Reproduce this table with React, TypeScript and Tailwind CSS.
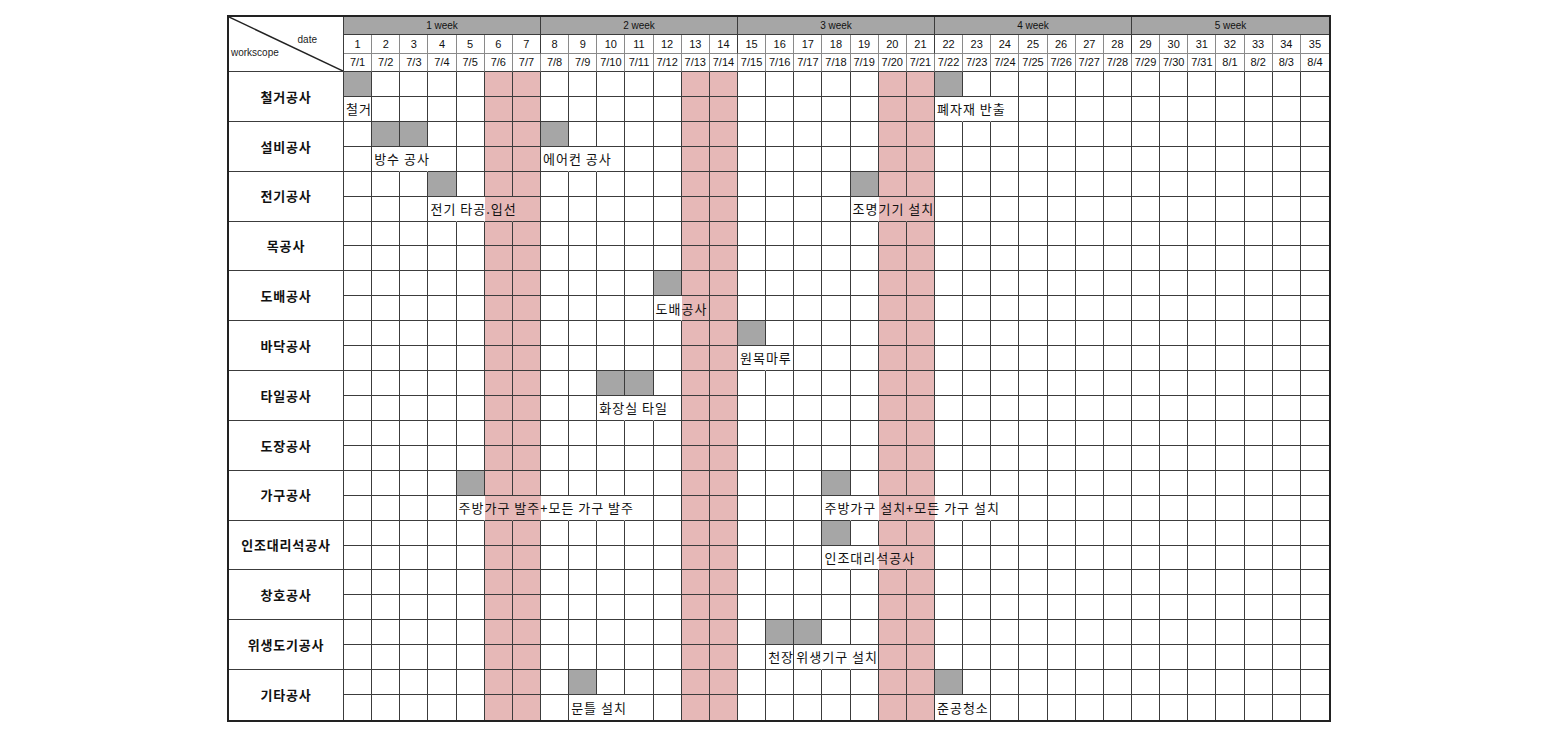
const WEEKS = ["1 week", "2 week", "3 week", "4 week", "5 week"];
const DAYS = Array.from({ length: 35 }, (_, i) => i + 1);
const PINK = [6, 7, 13, 14, 20, 21];

const dateOf = (d: number) => (d <= 31 ? `7/${d}` : `8/${d - 31}`);

type Label = { col: number; span: number; text: string; clip?: boolean };
type Task = { name: string; fills: number[]; labels: Label[] };

const TASKS: Task[] = [
  {
    name: "철거공사",
    fills: [1, 22],
    labels: [
      { col: 1, span: 1, text: "철거" },
      { col: 22, span: 3, text: "폐자재 반출" },
    ],
  },
  {
    name: "설비공사",
    fills: [2, 3, 8],
    labels: [
      { col: 2, span: 3, text: "방수 공사" },
      { col: 8, span: 3, text: "에어컨 공사" },
    ],
  },
  {
    name: "전기공사",
    fills: [4, 19],
    labels: [
      { col: 4, span: 4, text: "전기 타공.입선" },
      { col: 19, span: 3, text: "조명기기 설치" },
    ],
  },
  { name: "목공사", fills: [], labels: [] },
  { name: "도배공사", fills: [12], labels: [{ col: 12, span: 2, text: "도배공사" }] },
  { name: "바닥공사", fills: [15], labels: [{ col: 15, span: 2, text: "원목마루" }] },
  { name: "타일공사", fills: [10, 11], labels: [{ col: 10, span: 3, text: "화장실 타일" }] },
  { name: "도장공사", fills: [], labels: [] },
  {
    name: "가구공사",
    fills: [5, 18],
    labels: [
      { col: 5, span: 7, text: "주방가구 발주+모든 가구 발주" },
      { col: 18, span: 7, text: "주방가구 설치+모든 가구 설치" },
    ],
  },
  { name: "인조대리석공사", fills: [18], labels: [{ col: 18, span: 4, text: "인조대리석공사" }] },
  { name: "창호공사", fills: [], labels: [] },
  {
    name: "위생도기공사",
    fills: [16, 17],
    labels: [
      { col: 16, span: 1, text: "천장", clip: true },
      { col: 17, span: 3, text: "위생기구 설치" },
    ],
  },
  {
    name: "기타공사",
    fills: [9, 22],
    labels: [
      { col: 9, span: 3, text: "문틀 설치" },
      { col: 22, span: 2, text: "준공청소" },
    ],
  },
];

const KR = { fontFamily: '"Noto Sans CJK KR", "Noto Sans", sans-serif' };
const EN = { fontFamily: '"Liberation Sans", Arial, sans-serif' };

const TaskRows = ({ task, last }: { task: Task; last: boolean }) => {
  const bottom = (isLast: boolean) => (isLast ? "border-b-0" : "border-b");

  const labelAt = (c: number) => task.labels.find((l) => l.col === c);
  const covered = (c: number) =>
    task.labels.some((l) => c >= l.col && c < l.col + l.span - 1);

  return (
    <>
      <div
        className={`row-span-2 flex items-center justify-center border-r border-[#3c3c3c] ${bottom(last)} text-[13px] font-bold tracking-[0.8px] text-[#111]`}
        style={KR}
      >
        {task.name}
      </div>

      {/* top row: progress fills */}
      {DAYS.map((d) => {
        const bg = task.fills.includes(d)
          ? "bg-[#a6a6a6]"
          : PINK.includes(d)
            ? "bg-[#e6b8b7]"
            : "bg-white";
        return (
          <div
            key={`t${d}`}
            className={`${bg} border-b border-[#3c3c3c] ${d === 35 ? "" : "border-r"}`}
          />
        );
      })}

      {/* bottom row: labels spilling over */}
      {DAYS.map((d) => {
        const bg = PINK.includes(d) ? "bg-[#e6b8b7]" : "bg-white";
        const label = labelAt(d);
        const hideRight = covered(d);
        return (
          <div
            key={`b${d}`}
            className={`relative ${bg} border-[#3c3c3c] ${bottom(last)} ${
              d === 35 ? "" : hideRight ? "border-r border-r-transparent" : "border-r"
            } ${label?.clip ? "overflow-hidden" : ""}`}
          >
            {label && (
              <span
                className="absolute left-[2px] top-0 bottom-0 z-10 flex items-center whitespace-nowrap text-[13px] tracking-[1px] text-[#111]"
                style={KR}
              >
                {label.text}
              </span>
            )}
          </div>
        );
      })}
    </>
  );
};

export default function App() {
  return (
    <div className="min-h-[740px] w-[1560px] bg-white pt-[15px]">
      <div className="ml-[227px] grid h-[707px] w-[1104px] grid-cols-[115px_repeat(35,minmax(0,1fr))] grid-rows-[18px_19px_18px_repeat(26,minmax(0,1fr))] border-2 border-[#222]">
        {/* corner header */}
        <div className="relative row-span-3 border-b border-r border-[#3c3c3c] bg-white" style={EN}>
          <svg className="absolute inset-0 h-full w-full" viewBox="0 0 100 100" preserveAspectRatio="none">
            <line x1="0" y1="0" x2="100" y2="100" stroke="#222" strokeWidth="1.5" vectorEffect="non-scaling-stroke" />
          </svg>
          <span className="absolute right-[26px] top-[15px] text-[10px] text-[#222]">date</span>
          <span className="absolute left-[2px] top-[28px] text-[10px] text-[#222]">workscope</span>
        </div>

        {WEEKS.map((w, i) => (
          <div
            key={w}
            className={`col-span-7 flex items-center justify-center border-b border-[#3c3c3c] bg-[#a6a6a6] text-[10px] text-[#111] ${
              i === 4 ? "" : "border-r"
            }`}
            style={EN}
          >
            {w}
          </div>
        ))}

        {DAYS.map((d) => (
          <div
            key={`n${d}`}
            className={`flex items-center justify-center border-b border-[#8a8a8a] text-[11px] text-[#111] ${
              d === 35 ? "" : "border-r"
            } ${d % 7 === 0 && d !== 35 ? "border-r-[#3c3c3c]" : ""}`}
            style={EN}
          >
            {d}
          </div>
        ))}

        {DAYS.map((d) => (
          <div
            key={`d${d}`}
            className={`flex items-center justify-center border-b border-[#3c3c3c] text-[11px] text-[#111] ${
              d === 35 ? "" : "border-r border-r-[#8a8a8a]"
            } ${d % 7 === 0 && d !== 35 ? "border-r-[#3c3c3c]" : ""}`}
            style={EN}
          >
            {dateOf(d)}
          </div>
        ))}

        {TASKS.map((t, i) => (
          <TaskRows key={t.name} task={t} last={i === TASKS.length - 1} />
        ))}
      </div>
    </div>
  );
}
